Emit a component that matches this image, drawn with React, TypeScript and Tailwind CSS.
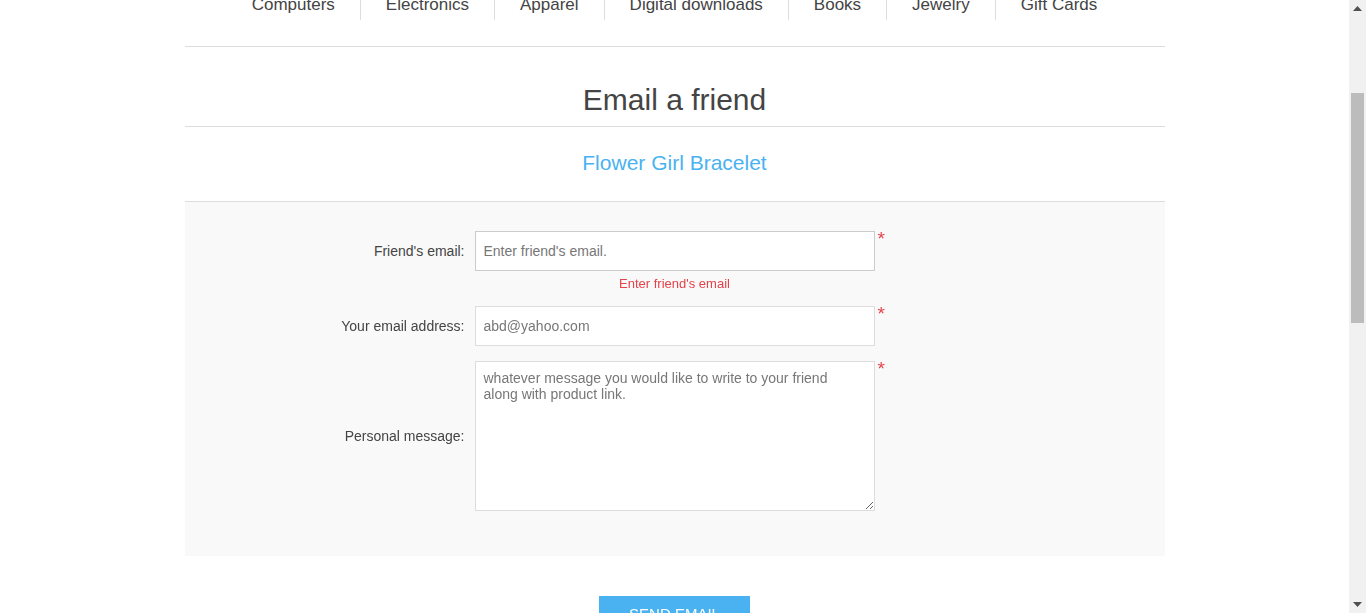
import { useLayoutEffect, useRef } from 'react'

const categories = ['Computers', 'Electronics', 'Apparel', 'Digital downloads', 'Books', 'Jewelry', 'Gift Cards']

function Required() {
  return <span className="self-start -mt-[2px] ml-[3px] -mr-[8px] text-[19px] leading-[20px] text-[#e4434b]">*</span>
}

// classic browser scrollbar, drawn since the page is captured mid-scroll
function ScrollBar() {
  return (
    <div className="w-[17px] shrink-0 h-full flex flex-col bg-[#f1f1f1]">
      <div className="h-[17px] flex items-center justify-center">
        <svg width="9" height="5" viewBox="0 0 9 5"><path d="M0 5 L4.5 0 L9 5 Z" fill="#505050" /></svg>
      </div>
      <div className="flex-1 pt-[76px] px-[2px]">
        <div className="h-[230px] bg-[#bcbcbc]" />
      </div>
      <div className="h-[17px] flex items-center justify-center">
        <svg width="9" height="5" viewBox="0 0 9 5"><path d="M0 0 L9 0 L4.5 5 Z" fill="#505050" /></svg>
      </div>
    </div>
  )
}

export default function App() {
  const pageRef = useRef<HTMLDivElement>(null)

  useLayoutEffect(() => {
    if (pageRef.current) pageRef.current.scrollTop = 204
  }, [])

  return (
    <div className="flex h-screen w-full overflow-hidden bg-white font-['Liberation_Sans',Arial,sans-serif] text-[#444]">
      <div
        ref={pageRef}
        className="flex-1 h-full overflow-y-auto [scrollbar-width:none] [&::-webkit-scrollbar]:hidden"
      >
        <div className="min-h-[1543px]">
          <div className="w-[980px] mx-auto">

            {/* Header (above the fold) */}
            <div className="h-[163px] flex items-center justify-between">
              <span className="text-[28px] font-bold text-[#444]">nopCommerce</span>
              <div className="flex gap-4 text-[12px] uppercase text-[#777]">
                <span>Register</span>
                <span>Log in</span>
                <span>Wishlist (0)</span>
                <span>Shopping cart (0)</span>
              </div>
            </div>

            {/* Menu */}
            <nav className="border-t border-b border-[#ddd] pt-[30px] pb-[26px]">
              <ul className="flex justify-center h-[30px]">
                {categories.map((c, i) => (
                  <li
                    key={c}
                    className={`px-[25px] text-[17px] leading-[30px] text-[#444] ${i > 0 ? 'border-l border-[#ddd]' : ''}`}
                  >
                    {c}
                  </li>
                ))}
              </ul>
            </nav>

            {/* Title */}
            <h1 className="mt-[35px] pb-[8px] border-b border-[#ddd] text-center text-[30px] leading-[36px] font-normal text-[#444]">
              Email a friend
            </h1>

            <div className="pt-[24px] pb-[24px] border-b border-[#ddd] text-center">
              <span className="text-[21px] leading-[24px] text-[#4ab2f1]">Flower Girl Bracelet</span>
            </div>

            {/* Form */}
            <div className="bg-[#f9f9f9] pt-[29px] pb-[30px]">
              <div className="mb-[14px]">
                <div className="flex items-center">
                  <label className="w-[280px] text-right text-[14px] text-[#444]">Friend's email:</label>
                  <input
                    autoFocus
                    placeholder="Enter friend's email."
                    className="ml-[10px] w-[400px] h-[40px] px-[8px] bg-white border border-[#ddd] text-[14px] text-[#777] placeholder:text-[#777] outline-none focus:border-[#ccc]"
                  />
                  <Required />
                </div>
                <div className="mt-[5px] text-center text-[13px] leading-[16px] text-[#e4434b]">Enter friend's email</div>
              </div>

              <div className="mb-[15px] flex items-center">
                <label className="w-[280px] text-right text-[14px] text-[#444]">Your email address:</label>
                <input
                  defaultValue="abd@yahoo.com"
                  className="ml-[10px] w-[400px] h-[40px] px-[8px] bg-white border border-[#ddd] text-[14px] text-[#777] outline-none"
                />
                <Required />
              </div>

              <div className="mb-[15px] flex items-center">
                <label className="w-[280px] text-right text-[14px] text-[#444]">Personal message:</label>
                <textarea
                  defaultValue="whatever message you would like to write to your friend along with product link."
                  className="ml-[10px] w-[400px] h-[150px] p-[8px] bg-white border border-[#ddd] text-[14px] leading-4 text-[#777] outline-none"
                />
                <Required />
              </div>
            </div>

            <div className="mt-[40px] flex justify-center">
              <button className="h-[40px] px-[30px] bg-[#4ab2f1] text-white text-[15px] leading-[36px] uppercase flex items-start">
                Send email
              </button>
            </div>

          </div>
        </div>
      </div>
      <ScrollBar />
    </div>
  )
}
